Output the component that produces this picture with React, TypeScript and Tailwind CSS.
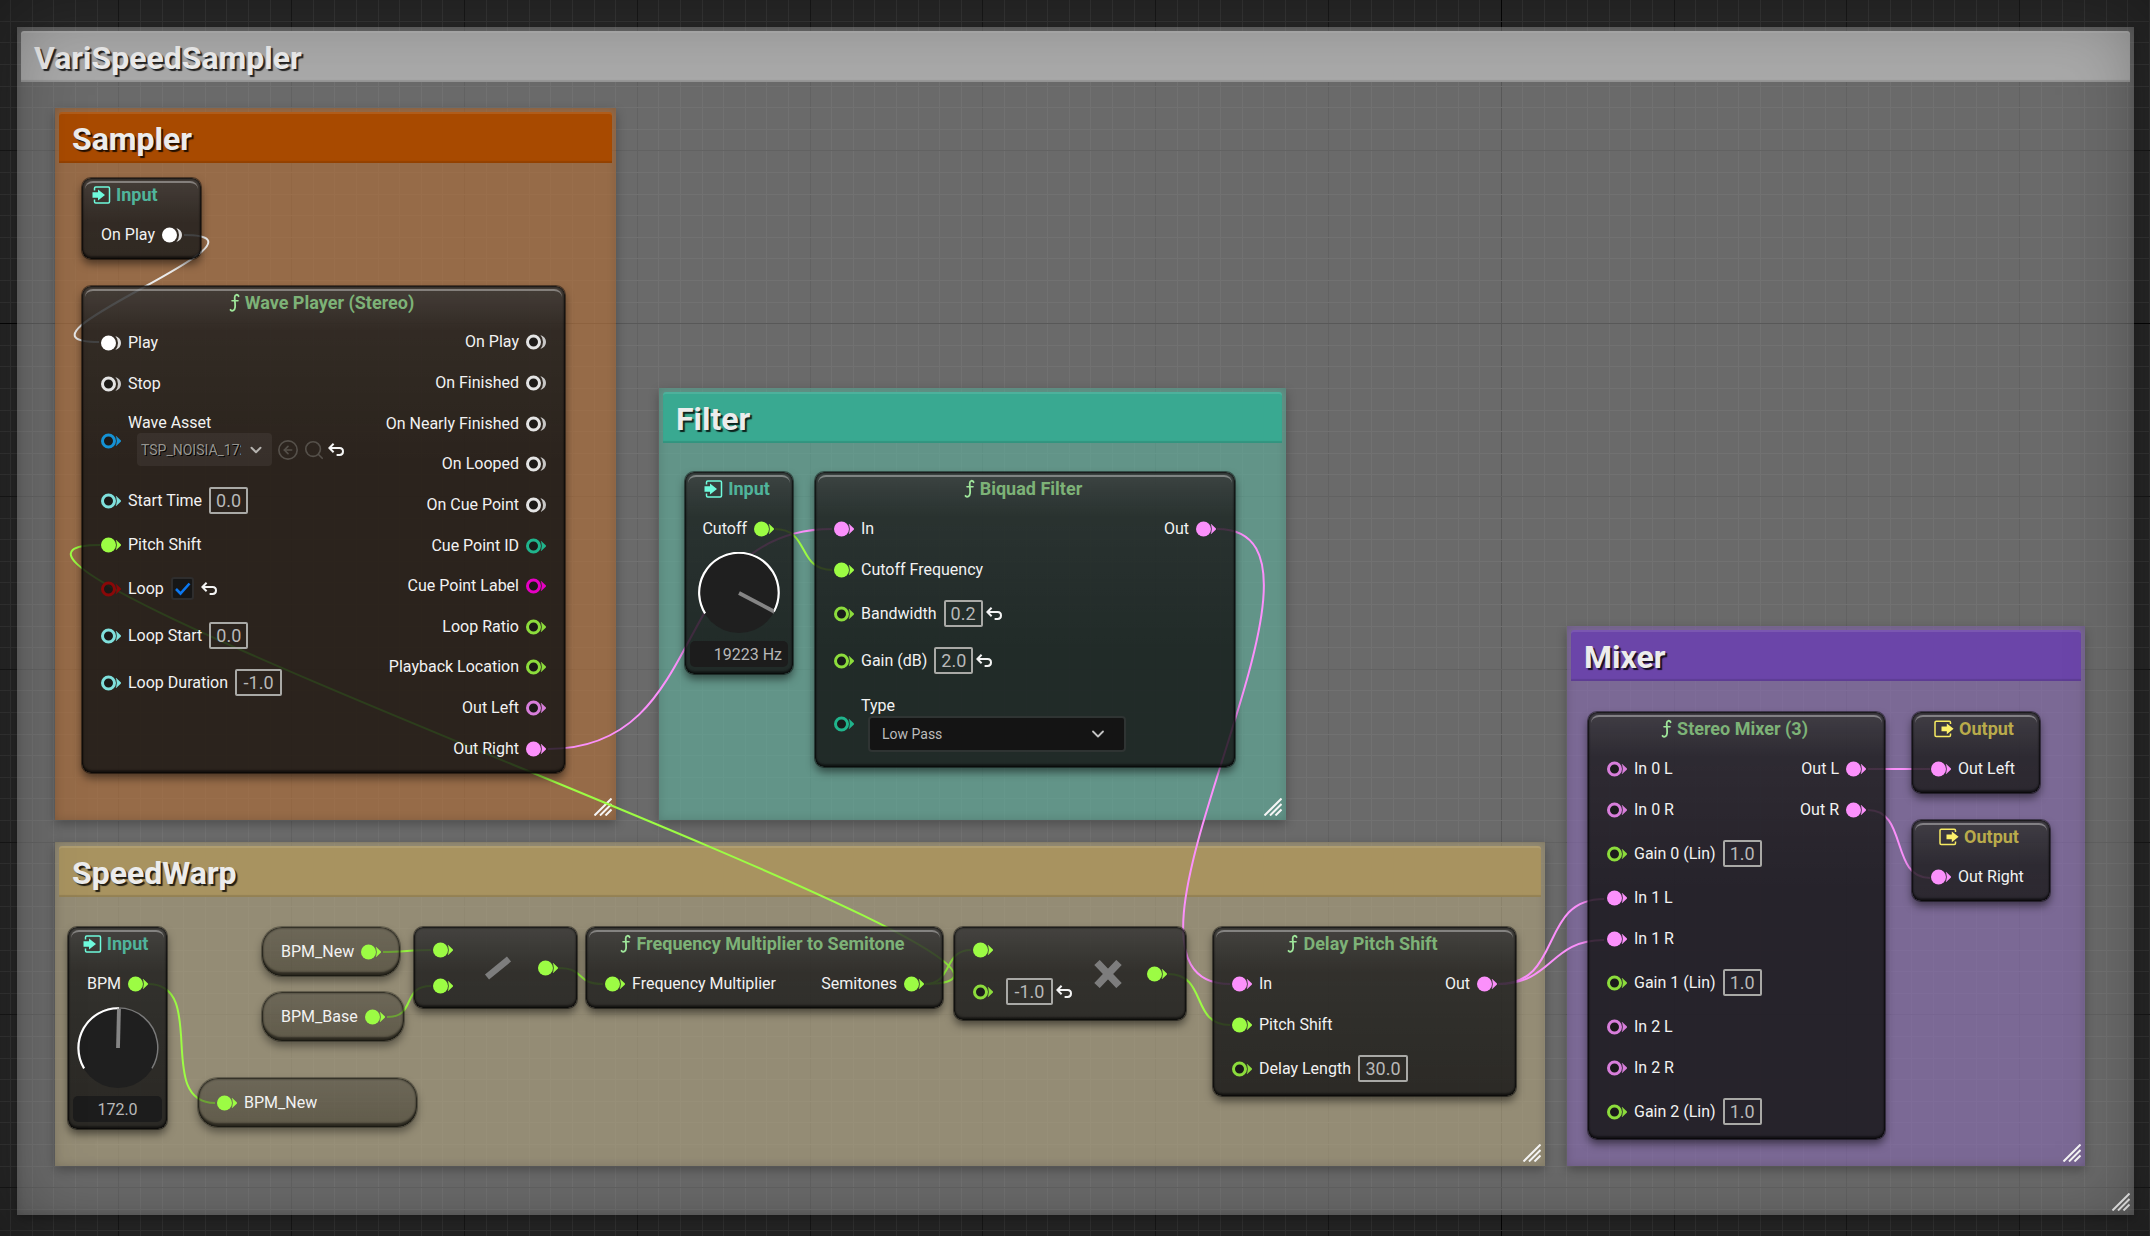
import React from "react";
import { ChevronDown, CircleArrowLeft, Search } from "lucide-react";

const GREEN = "#9cfc44";
const PINK = "#fb90fb";
const WHITE = "#ffffff";
const AQUA = "#7fe0dc";
const BLUE = "#1592d4";
const RED = "#8a0808";
const TEAL = "#20b48c";
const MAGENTA = "#e600c4";

/* ---------- Canvas background ---------- */

const CELL = 21.6;

function gridLines(origin: number, center: number, max: number) {
  const lines: { at: number; tone: string }[] = [];
  const first = -Math.floor(origin / CELL);
  for (let i = first; origin + i * CELL < max; i++) {
    const major = i % 8 === 0;
    const tone = i === center ? "#050505" : major ? "#191919" : "#373737";
    lines.push({ at: Math.floor(origin + i * CELL), tone });
  }
  return lines.sort((a, b) => (a.tone < b.tone ? 1 : -1));
}

function Grid() {
  return (
    <svg className="absolute inset-0 h-full w-full" aria-hidden="true">
      {gridLines(118.8, 64, 4000).map((l) => (
        <rect key={"v" + l.at} x={l.at} y={0} width={1} height="100%" fill={l.tone} />
      ))}
      {gridLines(150.8, 8, 3000).map((l) => (
        <rect key={"h" + l.at} x={0} y={l.at} width="100%" height={1} fill={l.tone} />
      ))}
    </svg>
  );
}

/* ---------- Wires ---------- */

const wires: { from: [number, number]; to: [number, number]; pull: number; color: string }[] = [
  { from: [184, 235], to: [99, 342], pull: 110, color: "#ececec" },
  { from: [925, 984], to: [100, 545], pull: 238, color: GREEN },
  { from: [548, 749], to: [832, 529], pull: 166, color: PINK },
  { from: [775, 529], to: [832, 570], pull: 35, color: GREEN },
  { from: [1217, 529], to: [1230, 984], pull: 157, color: PINK },
  { from: [148, 984], to: [215, 1103], pull: 61, color: GREEN },
  { from: [383, 952], to: [431, 950], pull: 20, color: GREEN },
  { from: [387, 1017], to: [431, 986], pull: 30, color: GREEN },
  { from: [558, 968], to: [603, 984], pull: 28, color: GREEN },
  { from: [925, 984], to: [971, 950], pull: 28, color: GREEN },
  { from: [1168, 974], to: [1230, 1025], pull: 40, color: GREEN },
  { from: [1498, 984], to: [1604, 899], pull: 66, color: PINK },
  { from: [1498, 984], to: [1604, 940], pull: 55, color: PINK },
  { from: [1868, 769], to: [1930, 769], pull: 20, color: PINK },
  { from: [1868, 810], to: [1930, 878], pull: 40, color: PINK },
];

function Wires() {
  return (
    <svg className="pointer-events-none absolute inset-0 h-full w-full" fill="none" strokeWidth={2} aria-hidden="true">
      {wires.map((w, i) => (
        <path
          key={i}
          stroke={w.color}
          d={`M${w.from[0]} ${w.from[1]} C${w.from[0] + w.pull} ${w.from[1]} ${w.to[0] - w.pull} ${w.to[1]} ${w.to[0]} ${w.to[1]}`}
        />
      ))}
    </svg>
  );
}

/* ---------- Icons ---------- */

function FunctionIcon() {
  return (
    <svg width="11" height="20" viewBox="0 0 11 20" fill="none" stroke="#9fe79b" strokeWidth="1.8" strokeLinecap="round" aria-hidden="true">
      <path d="M9.6 3.2C8.6 1 5.9 1.3 5.7 4.2C5.6 6.6 6.4 11 6.1 14.2C5.8 17.6 3.2 18.7 1.5 16.8" />
      <path d="M3 7.8H9" strokeWidth="1.6" />
    </svg>
  );
}

function InputIcon() {
  return (
    <svg width="19" height="18" viewBox="0 0 19 18" aria-hidden="true">
      <path d="M2.5 4.5V2.2Q2.5 1 3.7 1H16.3Q17.5 1 17.5 2.2V15.8Q17.5 17 16.3 17H3.7Q2.5 17 2.5 15.8V13.5" fill="none" stroke="#6ffadc" strokeWidth="1.5" />
      <path d="M0.5 6.2H6V3.6L13 9L6 14.4V11.8H0.5Z" fill="#6ffadc" />
    </svg>
  );
}

function OutputIcon() {
  return (
    <svg width="20" height="18" viewBox="0 0 20 18" aria-hidden="true">
      <path d="M16.5 4V2.4Q16.5 1.2 15.3 1.2H2.2Q1 1.2 1 2.4V15.2Q1 16.4 2.2 16.4H15.3Q16.5 16.4 16.5 15.2V13.6" fill="none" stroke="#f6ea62" strokeWidth="1.5" />
      <path d="M7.5 6.4H12.8V3.4L19.6 8.8L12.8 14.2V11.2H7.5Z" fill="#fcf06a" />
    </svg>
  );
}

function Pin({ color, filled, trigger }: { color: string; filled?: boolean; trigger?: boolean }) {
  return (
    <svg width="20" height="16" viewBox="0 0 20 16" className="shrink-0" aria-hidden="true">
      {filled ? (
        <circle cx="7.5" cy="8" r="7.5" fill={color} />
      ) : (
        <circle cx="7.5" cy="8" r="6" fill="#161616" fillOpacity="0.7" stroke={color} strokeWidth="3" />
      )}
      {trigger ? (
        <path d="M14.4 1Q20 3 20 8Q20 13 14.4 15Q17 12 17 8Q17 4 14.4 1Z" fill={color} fillOpacity="0.85" />
      ) : (
        <path d="M15.2 3.2L20.2 8L15.2 12.8Q16.8 8 15.2 3.2Z" fill={color} stroke={color} strokeWidth="0.5" />
      )}
    </svg>
  );
}

function ResetButton() {
  return (
    <button type="button" aria-label="Reset to default" className="shrink-0">
      <svg width="17" height="14" viewBox="0 0 17 14" fill="none" stroke="#f4f4f4" strokeWidth="2" aria-hidden="true">
        <path d="M5.6 0.8L1.4 5L5.6 9.2" />
        <path d="M1.6 5H11.6Q15 5 15 8.6Q15 12 11.6 12H8.6" />
      </svg>
    </button>
  );
}

function ResizeGrip() {
  return (
    <svg width="18" height="18" viewBox="0 0 18 18" stroke="#f5f5f5" strokeWidth="2" className="absolute right-1 bottom-1" aria-hidden="true">
      <path d="M0.5 17.5L17.5 0.5M6 17.5L17.5 6M11.5 17.5L17.5 11.5" />
    </svg>
  );
}

/* ---------- Comment groups ---------- */

function Group({ title, place, header }: { title: string; place: string; header: string }) {
  return (
    <section className={"absolute flex flex-col p-1 shadow-[0_4px_10px_rgba(0,0,0,0.28),inset_0_0_10px_rgba(0,0,0,0.14)] " + place}>
      <h2
        className={
          "flex h-[51px] items-center rounded-t-[3px] px-[13px] pt-[2px] text-[32px] font-bold text-[#ececec] [text-shadow:2px_2px_1px_rgba(0,0,0,0.8)] shadow-[inset_0_2px_0_rgba(255,255,255,0.1),inset_0_-2px_1px_rgba(0,0,0,0.12)] " +
          header
        }
      >
        {title}
      </h2>
      <ResizeGrip />
    </section>
  );
}

/* ---------- Nodes ---------- */

const NODE_FRAME =
  "absolute flex flex-col rounded-[9px] bg-[rgba(20,20,20,0.82)] bg-[linear-gradient(to_bottom,rgba(255,255,255,0.12)_0px,rgba(255,255,255,0.035)_44px,rgba(255,255,255,0)_180px)] shadow-[0_0_0_1px_rgba(0,0,0,0.45),0_5px_9px_rgba(0,0,0,0.5),inset_0_0_2px_1px_rgba(0,0,0,0.75),inset_0_-3px_2px_rgba(0,0,0,0.4)] ";

type Kind = "function" | "input" | "output";

const titleTone: Record<Kind, string> = {
  function: "gap-[5px] text-[#7db277]",
  input: "gap-[5px] text-[#50b49b]",
  output: "gap-[5px] text-[#b9ab4b]",
};

function Node({
  kind,
  title,
  place,
  start,
  children,
}: {
  kind: Kind;
  title: string;
  place: string;
  start?: boolean;
  children: React.ReactNode;
}) {
  return (
    <article className={NODE_FRAME + "pb-1 " + place}>
      <span className="pointer-events-none absolute inset-x-[3px] top-[3px] h-4 rounded-t-[8px] border-t-2 border-white/35" />
      <h3
        className={
          "flex h-9 shrink-0 items-center pb-[2px] text-[18px] font-bold whitespace-nowrap " +
          (start ? "pl-[10px] " : "justify-center pr-1 ") +
          titleTone[kind]
        }
      >
        {kind === "function" && <FunctionIcon />}
        {kind === "input" && <InputIcon />}
        {kind === "output" && <OutputIcon />}
        {title}
      </h3>
      {children}
    </article>
  );
}

function In({ label, color, filled, trigger }: { label?: string; color: string; filled?: boolean; trigger?: boolean }) {
  return (
    <div className="flex h-[41px] items-center gap-[7px] pl-[19px]">
      <Pin color={color} filled={filled} trigger={trigger} />
      {label}
    </div>
  );
}

function Out({ label, color, filled, trigger }: { label?: string; color: string; filled?: boolean; trigger?: boolean }) {
  return (
    <div className="flex h-[41px] items-center justify-end gap-[7px] pr-[19px]">
      {label}
      <Pin color={color} filled={filled} trigger={trigger} />
    </div>
  );
}

const VALUE_BOX =
  "h-[27px] rounded-[2px] border-2 border-[#a9a9a6] bg-transparent text-center text-[18px] text-[#b8b8b8] outline-none ";

function ValueIn({
  label,
  color,
  value,
  width,
  reset,
}: {
  label: string;
  color: string;
  value: string;
  width: string;
  reset?: boolean;
}) {
  return (
    <div className="flex h-[47px] items-center pl-[19px]">
      <Pin color={color} />
      <label className="flex items-center gap-[7px] pl-[7px]">
        {label}
        <input type="text" defaultValue={value} className={VALUE_BOX + width} />
      </label>
      {reset && (
        <span className="flex pl-[3px]">
          <ResetButton />
        </span>
      )}
    </div>
  );
}

const RIM_START = [-35, 21];
const RIM_END = [35, 21];

function KnobNode({
  place,
  label,
  value,
  align,
  needle,
}: {
  place: string;
  label: string;
  value: string;
  align: string;
  needle: [number, number];
}) {
  return (
    <Node kind="input" title="Input" place={place}>
      <Out label={label} color={GREEN} filled />
      <div className="relative mx-auto mt-[3px] h-[82px] w-[84px]">
        <svg width="84" height="82" viewBox="-42 -41 84 82" fill="none" aria-hidden="true">
          <circle r="40" fill="#1f1f1f" />
          <path d={`M${RIM_START} A41 41 0 1 1 ${RIM_END}`} stroke="#7a7a7a" strokeWidth="1.5" transform="scale(0.97)" />
          <path
            d={`M${RIM_START} A41 41 0 ${needle[1] > 0 ? 1 : 0} 1 ${needle}`}
            stroke="#ffffff"
            strokeWidth="2.2"
            transform="scale(0.97)"
          />
          <path d={`M0 0L${needle}`} stroke="#858585" strokeWidth="4" transform="scale(0.96)" />
        </svg>
        <input type="range" aria-label={label + " knob"} className="absolute inset-0 h-full w-full cursor-pointer opacity-0" />
      </div>
      <input
        type="text"
        aria-label={label}
        defaultValue={value}
        className={"mx-[5px] mt-[7px] mb-[3px] h-[26px] min-w-0 rounded-[5px] bg-[#1c1c1c] px-[6px] text-[16px] text-[#b8b8b8] outline-none " + align}
      />
    </Node>
  );
}

function Pill({ place, children }: { place: string; children: React.ReactNode }) {
  return (
    <article
      className={
        "absolute flex h-[49px] items-center gap-[7px] rounded-[20px] bg-[rgba(20,18,10,0.4)] bg-[linear-gradient(to_bottom,rgba(255,255,255,0.08),rgba(255,255,255,0))] px-[19px] shadow-[0_0_0_1px_rgba(20,20,14,0.35),0_5px_8px_rgba(0,0,0,0.4),inset_0_0_2px_1px_rgba(15,15,10,0.8),inset_0_-4px_2px_rgba(10,10,6,0.55)] " +
        place
      }
    >
      {children}
    </article>
  );
}

/* ---------- Page ---------- */

export default function App() {
  return (
    <main className="relative min-h-screen w-full overflow-hidden bg-[#292929] font-[Roboto,sans-serif] text-[16px] leading-5 text-[#f2f2f2]">
      <Grid />

      <Group
        title="VariSpeedSampler"
        place="top-[27px] right-4 left-[17px] h-[1188px] bg-[rgba(172,172,172,0.5)]"
        header="bg-[#a9a9a9]"
      />
      <Group title="Sampler" place="left-[55px] top-[108px] h-[712px] w-[561px] bg-[rgba(193,107,37,0.5)]" header="bg-[#a84a00]" />
      <Group title="Filter" place="left-[659px] top-[388px] h-[432px] w-[627px] bg-[rgba(89,189,165,0.5)]" header="bg-[#39a991]" />
      <Group title="SpeedWarp" place="left-[55px] top-[842px] h-[324px] w-[1490px] bg-[rgba(189,173,127,0.5)]" header="bg-[#a89360]" />
      <Group title="Mixer" place="left-[1567px] top-[626px] h-[540px] w-[518px] bg-[rgba(139,103,191,0.5)]" header="bg-[#6b45a9]" />

      <Wires />

      <Node kind="input" title="Input" start place="left-[82px] top-[178px] w-[119px]">
        <Out label="On Play" color={WHITE} filled trigger />
      </Node>

      <Node kind="function" title="Wave Player (Stereo)" place="left-[82px] top-[286px] h-[487px] w-[483px]">
        <div className="flex min-h-0 grow justify-between">
          <div>
            <In label="Play" color={WHITE} filled trigger />
            <In label="Stop" color="#e4e4e4" trigger />
            <div className="flex h-[73px] items-center gap-[7px] pl-[19px]">
              <Pin color={BLUE} />
              <div className="flex flex-col pb-[2px]">
                <label htmlFor="wave-asset">Wave Asset</label>
                <div className="flex items-center pl-[9px]">
                  <div className="relative">
                    <select
                      id="wave-asset"
                      className="h-[33px] w-[135px] appearance-none rounded-[4px] bg-white/6 pr-[31px] pl-1 text-[14px] text-[#979590] outline-none [text-shadow:1px_1px_0_#000]"
                    >
                      <option>TSP_NOISIA_172</option>
                    </select>
                    <ChevronDown size={18} strokeWidth={2.6} className="pointer-events-none absolute top-2 right-[7px] text-[#b4b2ae]" />
                  </div>
                  <button type="button" aria-label="Use selected asset" className="pl-[5px] text-[#55504a]">
                    <CircleArrowLeft size={22} strokeWidth={1.8} />
                  </button>
                  <button type="button" aria-label="Browse to asset" className="pl-1 text-[#55504a]">
                    <Search size={22} strokeWidth={1.8} />
                  </button>
                  <span className="flex pl-[3px]">
                    <ResetButton />
                  </span>
                </div>
              </div>
            </div>
            <ValueIn label="Start Time" color={AQUA} value="0.0" width="w-[39px]" />
            <In label="Pitch Shift" color={GREEN} filled />
            <div className="flex h-[47px] items-center gap-[7px] pl-[19px]">
              <Pin color={RED} />
              <label className="flex items-center gap-[7px]">
                Loop
                <span className="relative flex">
                  <input
                    type="checkbox"
                    defaultChecked
                    className="h-[23px] w-[23px] appearance-none rounded-[3px] border-2 border-[#2e2d2d] bg-[#161616]"
                  />
                  <svg width="23" height="23" viewBox="0 0 23 23" fill="none" className="pointer-events-none absolute inset-0" aria-hidden="true">
                    <path d="M5 12L9.5 16.5L18.5 6.5" stroke="#0b78f2" strokeWidth="2.6" />
                  </svg>
                </span>
              </label>
              <ResetButton />
            </div>
            <ValueIn label="Loop Start" color={AQUA} value="0.0" width="w-[39px]" />
            <ValueIn label="Loop Duration" color={AQUA} value="-1.0" width="w-[47px]" />
          </div>
          <div className="flex flex-col justify-between">
            {["On Play", "On Finished", "On Nearly Finished", "On Looped", "On Cue Point"].map((name) => (
              <Out key={name} label={name} color="#e4e4e4" trigger />
            ))}
            <Out label="Cue Point ID" color={TEAL} />
            <Out label="Cue Point Label" color={MAGENTA} />
            <Out label="Loop Ratio" color="#8cdc3c" />
            <Out label="Playback Location" color="#8cdc3c" />
            <Out label="Out Left" color="#d87edb" />
            <Out label="Out Right" color={PINK} filled />
          </div>
        </div>
      </Node>

      <KnobNode place="left-[685px] top-[472px] w-[108px]" label="Cutoff" value="19223 Hz" align="text-right" needle={[36, 19]} />

      <Node kind="function" title="Biquad Filter" place="left-[815px] top-[472px] w-[420px]">
        <div className="flex justify-between">
          <In label="In" color={PINK} filled />
          <Out label="Out" color={PINK} filled />
        </div>
        <In label="Cutoff Frequency" color={GREEN} filled />
        <ValueIn label="Bandwidth" color="#8cdc3c" value="0.2" width="w-[39px]" reset />
        <ValueIn label="Gain (dB)" color="#8cdc3c" value="2.0" width="w-[39px]" reset />
        <div className="flex h-[79px] items-center gap-[7px] pl-[19px]">
          <Pin color={TEAL} />
          <div className="flex flex-col">
            <label htmlFor="filter-type">Type</label>
            <div className="relative ml-[7px]">
              <select
                id="filter-type"
                className="h-9 w-[258px] appearance-none rounded-[4px] border-2 border-[#2f3433] bg-[#141414] pl-3 text-[14px] text-[#bcbcbc] outline-none"
              >
                <option>Low Pass</option>
              </select>
              <ChevronDown size={20} strokeWidth={2.2} className="pointer-events-none absolute top-2 right-[18px] text-[#c4c4c4]" />
            </div>
          </div>
        </div>
      </Node>

      <KnobNode place="left-[68px] top-[927px] w-[99px]" label="BPM" value="172.0" align="text-center" needle={[1, -41]} />

      <Pill place="left-[262px] top-[927px]">
        BPM_New
        <Pin color={GREEN} filled />
      </Pill>
      <Pill place="left-[262px] top-[992px]">
        BPM_Base
        <Pin color={GREEN} filled />
      </Pill>
      <Pill place="left-[198px] top-[1078px] w-[219px]">
        <Pin color={GREEN} filled />
        BPM_New
      </Pill>

      <article aria-label="Divide" className={NODE_FRAME + "left-[414px] top-[927px] h-[81px] w-[163px]"}>
        <div className="flex grow items-center justify-between px-[19px]">
          <div className="flex flex-col gap-5">
            <Pin color={GREEN} filled />
            <Pin color={GREEN} filled />
          </div>
          <div className="flex items-center gap-[26px]">
            <svg width="28" height="28" viewBox="0 0 28 28" aria-hidden="true">
              <path d="M3 23L25 5" stroke="#7d7d7d" strokeWidth="6.5" />
            </svg>
            <Pin color={GREEN} filled />
          </div>
        </div>
      </article>

      <Node kind="function" title="Frequency Multiplier to Semitone" place="left-[586px] top-[927px] w-[357px]">
        <div className="flex justify-between">
          <In label="Frequency Multiplier" color={GREEN} filled />
          <Out label="Semitones" color={GREEN} filled />
        </div>
      </Node>

      <article aria-label="Multiply" className={NODE_FRAME + "left-[954px] top-[927px] h-[93px] w-[232px]"}>
        <div className="flex grow items-center justify-between px-[19px]">
          <div className="flex flex-col gap-5">
            <Pin color={GREEN} filled />
            <div className="flex items-center">
              <Pin color="#8cdc3c" />
              <input type="text" aria-label="Multiply by" defaultValue="-1.0" className={VALUE_BOX + "ml-[13px] w-[47px]"} />
              <span className="flex pl-[3px]">
                <ResetButton />
              </span>
            </div>
          </div>
          <div className="flex items-center gap-[25px]">
            <svg width="28" height="28" viewBox="0 0 28 28" aria-hidden="true">
              <path d="M3 2.5L25 25.5M25 2.5L3 25.5" stroke="#7d7d7d" strokeWidth="7.5" />
            </svg>
            <Pin color={GREEN} filled />
          </div>
        </div>
      </article>

      <Node kind="function" title="Delay Pitch Shift" place="left-[1213px] top-[927px] w-[303px]">
        <div className="flex justify-between">
          <In label="In" color={PINK} filled />
          <Out label="Out" color={PINK} filled />
        </div>
        <In label="Pitch Shift" color={GREEN} filled />
        <ValueIn label="Delay Length" color="#8cdc3c" value="30.0" width="w-[50px]" />
      </Node>

      <Node kind="function" title="Stereo Mixer (3)" place="left-[1588px] top-[712px] w-[297px]">
        <div className="flex justify-between">
          <div>
            <In label="In 0 L" color="#d87edb" />
            <In label="In 0 R" color="#d87edb" />
            <ValueIn label="Gain 0 (Lin)" color="#8cdc3c" value="1.0" width="w-[39px]" />
            <In label="In 1 L" color={PINK} filled />
            <In label="In 1 R" color={PINK} filled />
            <ValueIn label="Gain 1 (Lin)" color="#8cdc3c" value="1.0" width="w-[39px]" />
            <In label="In 2 L" color="#d87edb" />
            <In label="In 2 R" color="#d87edb" />
            <ValueIn label="Gain 2 (Lin)" color="#8cdc3c" value="1.0" width="w-[39px]" />
          </div>
          <div>
            <Out label="Out L" color={PINK} filled />
            <Out label="Out R" color={PINK} filled />
          </div>
        </div>
      </Node>

      <Node kind="output" title="Output" place="left-[1912px] top-[712px] w-[128px]">
        <In label="Out Left" color={PINK} filled />
      </Node>
      <Node kind="output" title="Output" place="left-[1912px] top-[820px] w-[138px]">
        <In label="Out Right" color={PINK} filled />
      </Node>

      <div className="pointer-events-none absolute inset-0 shadow-[inset_0_0_80px_rgba(0,0,0,0.36)]" />
    </main>
  );
}
